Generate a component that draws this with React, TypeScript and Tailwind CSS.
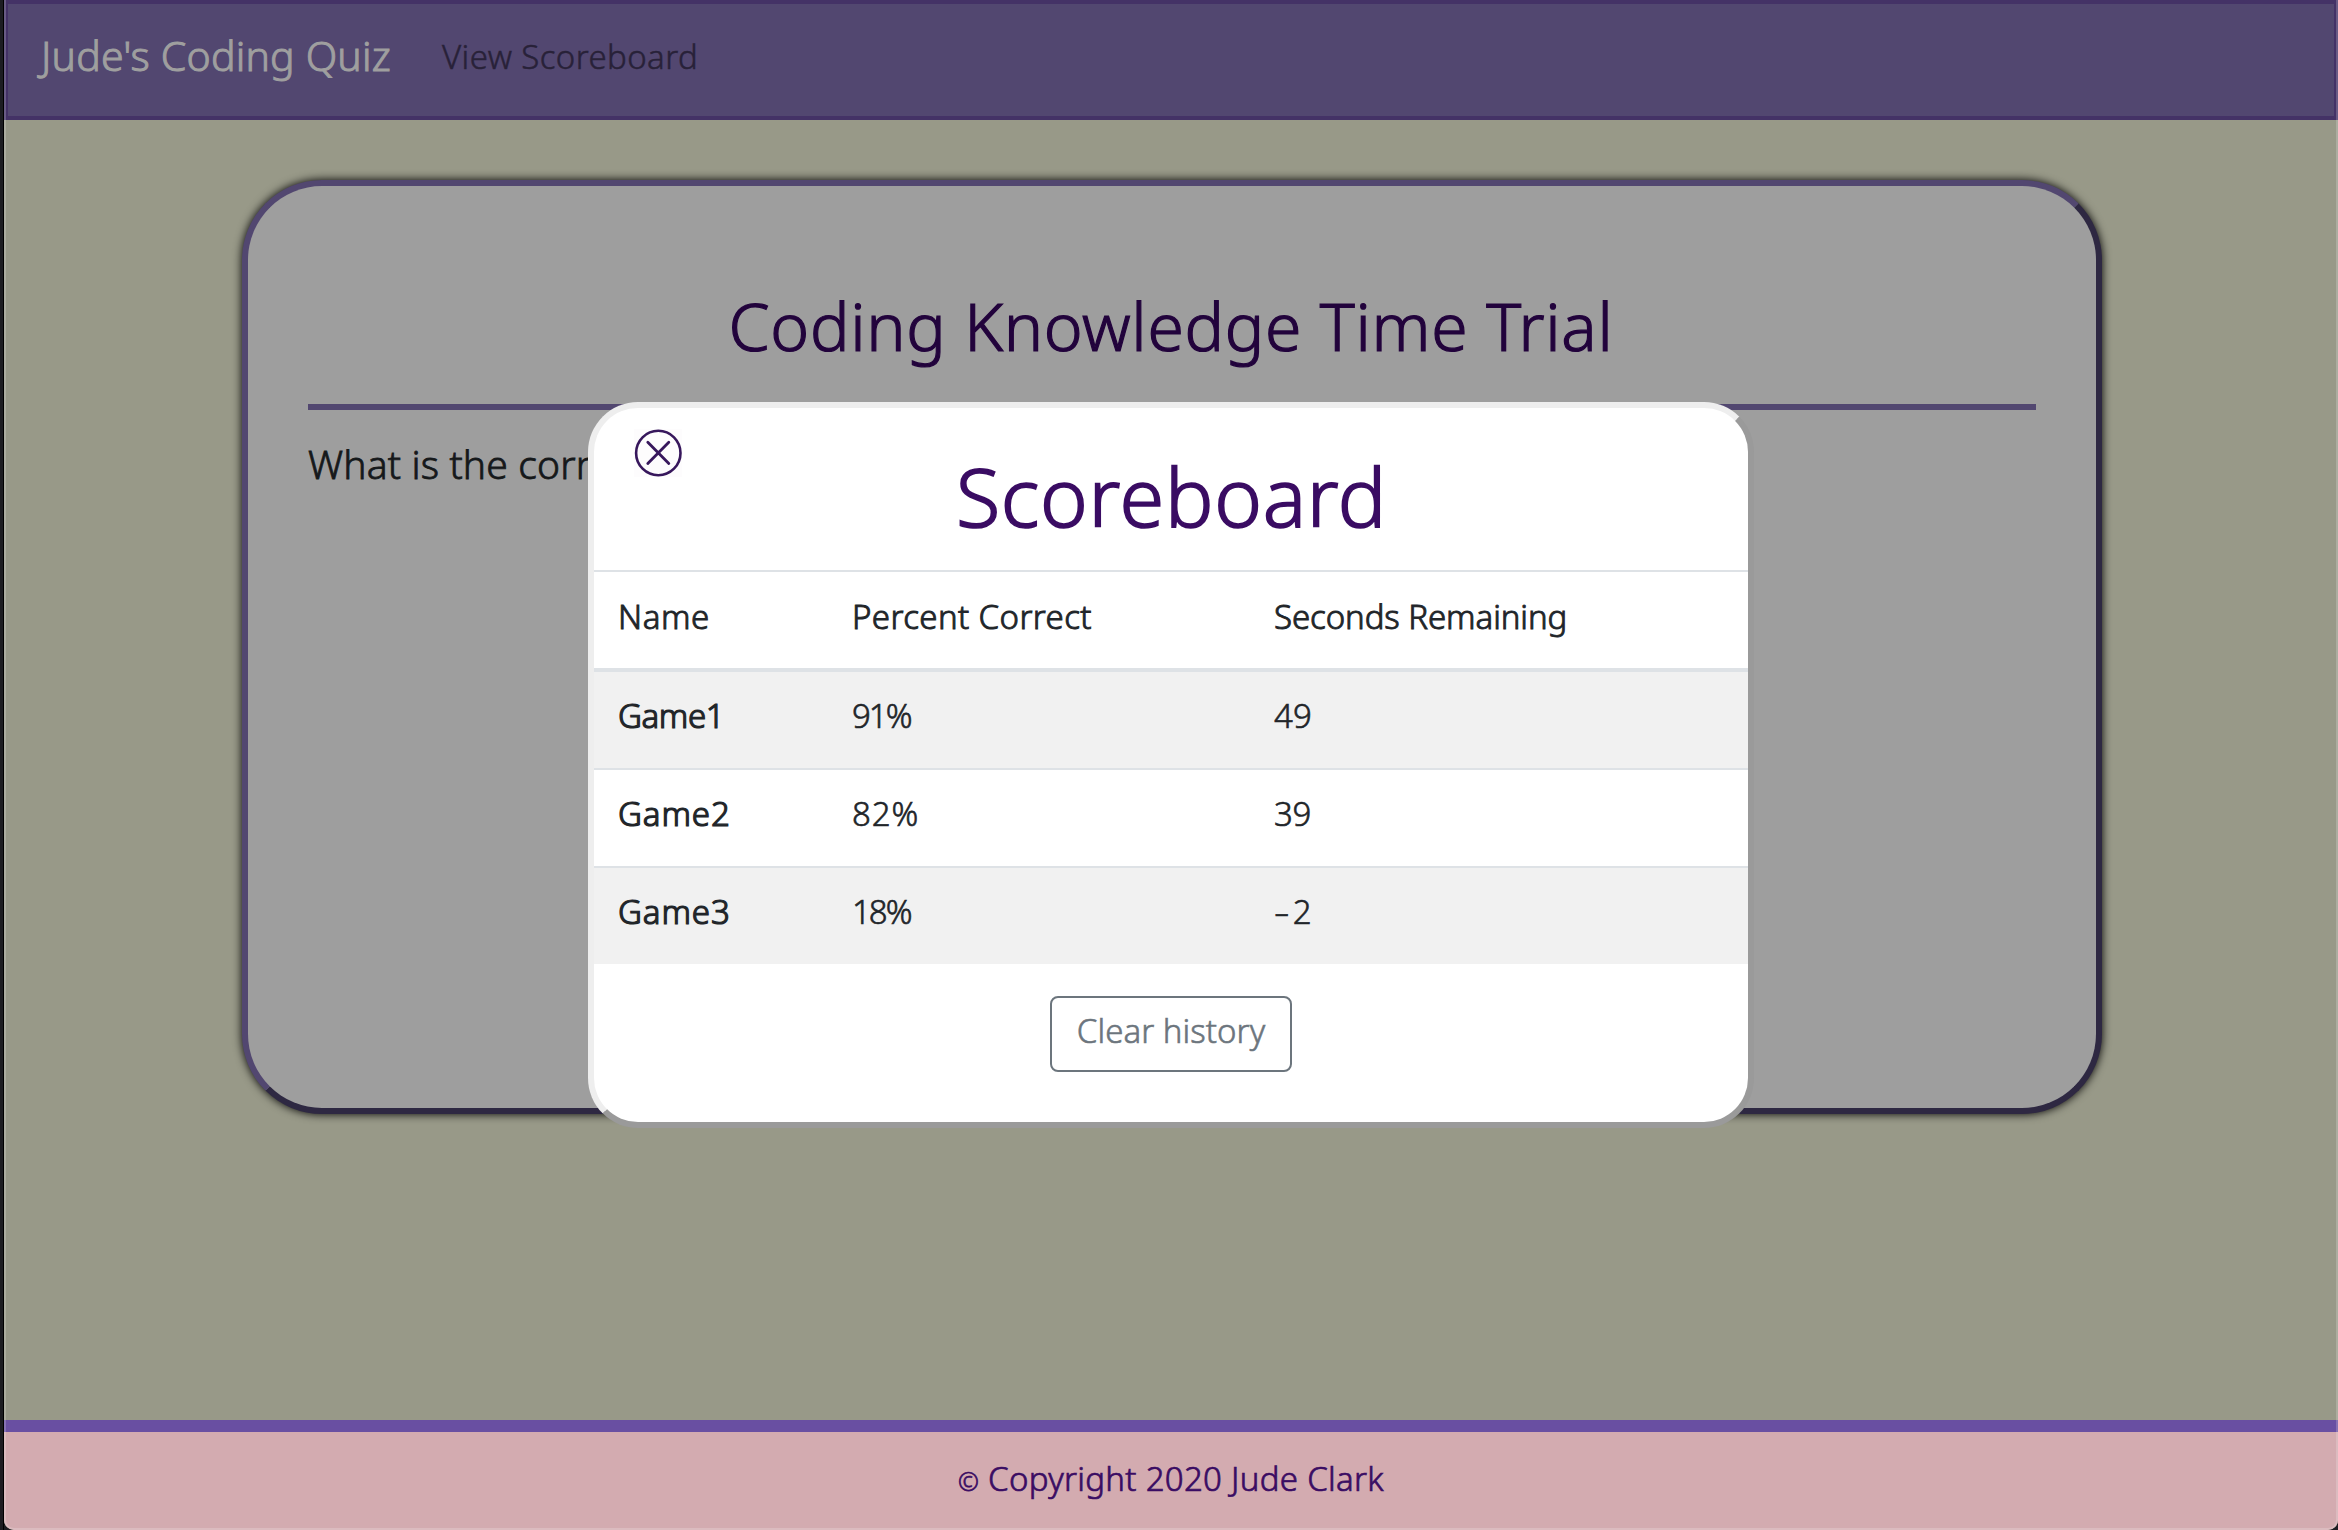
type Cell = { text: string; tracking: string };

const rows: { name: Cell; percent: Cell; seconds: number; secondsTracking: string }[] = [
  {
    name: { text: "Game1", tracking: "tracking-[-0.4px]" },
    percent: { text: "91%", tracking: "tracking-[-2px]" },
    seconds: 49,
    secondsTracking: "tracking-[0.2px]",
  },
  {
    name: { text: "Game2", tracking: "tracking-[0.9px]" },
    percent: { text: "82%", tracking: "tracking-[0.9px]" },
    seconds: 39,
    secondsTracking: "tracking-[-0.3px]",
  },
  {
    name: { text: "Game3", tracking: "tracking-[0.9px]" },
    percent: { text: "18%", tracking: "tracking-[-2px]" },
    seconds: -2,
    secondsTracking: "tracking-[0px]",
  },
];

const columns = "grid grid-cols-[234px_422px_1fr] pl-6";

function NavBar() {
  return (
    <nav className="flex h-[120px] items-start border-4 border-[#443266] bg-[#524770] pl-[33px]">
      <a className="mt-[21px] w-[401px] text-[41px] leading-[60px] tracking-[0.2px] text-[#9f9f9f] [-webkit-text-stroke:1px]">
        Jude's Coding Quiz
      </a>
      <a className="mt-[23px] text-[33px] leading-[60px] tracking-[0.4px] text-[#282138] [-webkit-text-stroke:0.5px]">
        View Scoreboard
      </a>
    </nav>
  );
}

function QuizCard() {
  return (
    <section className="mt-[60px] ml-[238px] h-[934px] w-[1860px] rounded-[80px] border-6 border-t-[#524770] border-r-[#2e2842] border-b-[#2e2842] border-l-[#524770] bg-[#9e9e9e] px-[60px] pt-[99px] shadow-[0_0_10px_#000]">
      <h1 className="pr-[2px] text-center text-[66px] leading-[80px] tracking-[0.67px] text-[#22033c] [-webkit-text-stroke:1.2px]">
        Coding Knowledge Time Trial
      </h1>
      <hr className="mt-[39px] h-1.5 border-0 bg-[#524770]" />
      <p className="mt-6 text-[39px] leading-[60px] tracking-[0.16px] text-[#15181a] [-webkit-text-stroke:0.8px]">
        What is the correct
      </p>
    </section>
  );
}

/* Negative values get a wide hyphen so they line up with two-digit numbers. */
function Seconds({ value, tracking }: { value: number; tracking: string }) {
  return (
    <span className={tracking}>
      {value < 0 && <span className="mr-2 inline-block origin-left scale-x-145">-</span>}
      {Math.abs(value)}
    </span>
  );
}

function Scoreboard() {
  return (
    <div className="absolute top-[402px] left-[588px] h-[726px] w-[1166px] rounded-[50px] border-6 border-t-[#eeeeee] border-r-[#9a9a9a] border-b-[#9a9a9a] border-l-[#eeeeee] bg-white text-[#212529]">
      <button className="absolute top-[21px] left-10 size-12 bg-[#fdfcfd]" aria-label="Close">
        <svg viewBox="0 0 48 48" fill="none" stroke="#37175c" className="size-12">
          <circle cx="24.3" cy="24" r="22.2" strokeWidth="2.6" />
          <path d="M13.8 13.2L34.8 34.6M34.8 13.2L13.8 34.6" strokeWidth="2.8" strokeLinecap="round" />
        </svg>
      </button>
      <h2 className="mt-[38px] mb-6 pl-[1px] text-center text-[81px] leading-[100px] tracking-[0.7px] text-[#3a0c63] [-webkit-text-stroke:1.6px]">
        Scoreboard
      </h2>
      <div className="text-[33px] leading-[48px]">
        <div className={`${columns} h-[102px] border-t-2 border-b-4 border-[#dee2e6] pt-[21px] [-webkit-text-stroke:0.9px]`}>
          <span className="tracking-[0.6px]">Name</span>
          <span className="tracking-[0.4px]">Percent Correct</span>
          <span className="tracking-[-0.08px]">Seconds Remaining</span>
        </div>
        {rows.map((row, i) => (
          <div
            key={row.name.text}
            className={`${columns} ${i === 0 ? "h-24" : "h-[98px] border-t-2 border-[#dee2e6]"} ${i % 2 === 0 ? "bg-[#f1f1f1]" : "bg-white"} pt-5 [-webkit-text-stroke:0.6px]`}
          >
            <span className={`${row.name.tracking} [-webkit-text-stroke:1.2px]`}>{row.name.text}</span>
            <span className={row.percent.tracking}>{row.percent.text}</span>
            <Seconds value={row.seconds} tracking={row.secondsTracking} />
          </div>
        ))}
      </div>
      <div className="mt-8 flex justify-center">
        <button className="flex h-[76px] w-[242px] items-start justify-center rounded-lg border-2 border-[#6c757d] pt-[9px] text-[33px] leading-[48px] font-light tracking-[0.05px] text-[#6c757d] [-webkit-text-stroke:0.6px]">
          Clear history
        </button>
      </div>
    </div>
  );
}

export default function App() {
  return (
    <div className="relative h-[1530px] overflow-hidden bg-[#1d1d22] pl-1 font-['Noto_Sans',sans-serif] font-light">
      <div className="absolute inset-y-0 left-[3px] w-px bg-black" />
      <div className="flex h-full flex-col overflow-hidden rounded-b-[10px] bg-[#989988]">
        <NavBar />
        <QuizCard />
        <footer className="mt-auto h-[110px] border-t-12 border-[#694fa2] bg-[#d3abb0] pt-[23px] text-center text-[33px] leading-[48px] tracking-[0.3px] text-[#3a0c63] [-webkit-text-stroke:0.7px]">
          <span className="text-[25px]">©</span> Copyright 2020 Jude Clark
        </footer>
      </div>
      <div className="pointer-events-none absolute inset-y-0 right-0 left-1 rounded-b-[10px] border-x-2 border-b-2 border-white/20" />
      <Scoreboard />
    </div>
  );
}
